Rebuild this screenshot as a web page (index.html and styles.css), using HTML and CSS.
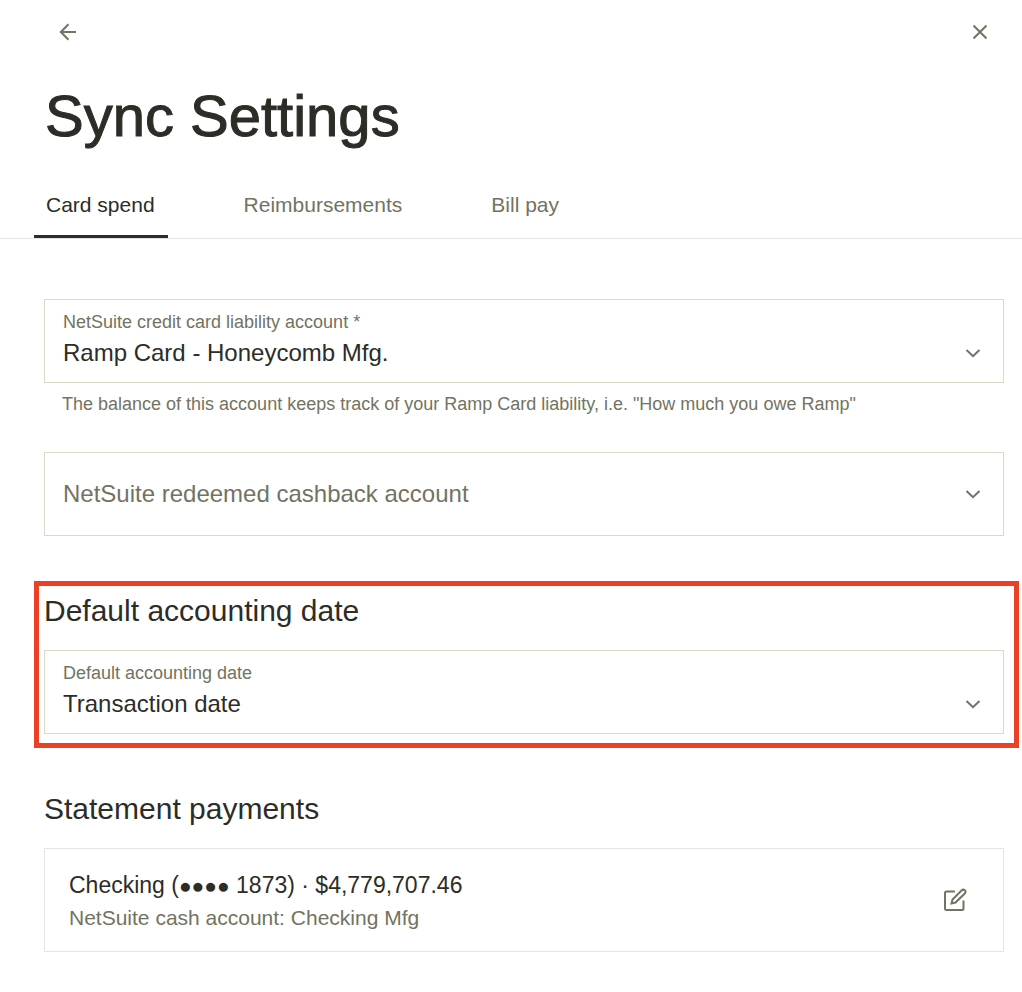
FILE: index.html
```html
<!DOCTYPE html>
<html lang="en">
<head>
    <meta charset="utf-8">
    <title>Sync Settings</title>
    <meta name="viewport" content="width=device-width, initial-scale=1.0">
    <link rel="stylesheet" href="styles.css">
</head>
<body>
    <header class="topbar">
        <button class="icon-btn" type="button" aria-label="Back">
            <svg width="24" height="24" viewBox="0 0 24 24"><path d="M12.500 4.200L4.800 12L12.500 19.800M4.800 12H20"/></svg>
        </button>
        <button class="icon-btn" type="button" aria-label="Close">
            <svg width="24" height="24" viewBox="0 0 24 24"><path d="M5.500 5.500L18.500 18.500M18.500 5.500L5.500 18.500"/></svg>
        </button>
    </header>

    <h1>Sync Settings</h1>

    <nav class="tabs" role="tablist">
        <button class="tab active" type="button" role="tab" aria-selected="true">Card spend</button>
        <button class="tab" type="button" role="tab" aria-selected="false">Reimbursements</button>
        <button class="tab" type="button" role="tab" aria-selected="false">Bill pay</button>
    </nav>

    <main>
        <div class="field">
            <label for="liability">NetSuite credit card liability account *</label>
            <select id="liability" required>
                <option>Ramp Card - Honeycomb Mfg.</option>
            </select>
            <svg class="chevron" width="16" height="16" viewBox="0 0 16 16"><path d="M1.500 5L8 11.200L14.500 5"/></svg>
        </div>
        <p class="hint">The balance of this account keeps track of your Ramp Card liability, i.e. "How much you owe Ramp"</p>

        <div class="field empty">
            <label for="cashback">NetSuite redeemed cashback account</label>
            <select id="cashback">
                <option value=""></option>
            </select>
            <svg class="chevron" width="16" height="16" viewBox="0 0 16 16"><path d="M1.500 5L8 11.200L14.500 5"/></svg>
        </div>

        <section class="highlight">
            <h2>Default accounting date</h2>
            <div class="field">
                <label for="date">Default accounting date</label>
                <select id="date">
                    <option>Transaction date</option>
                </select>
                <svg class="chevron" width="16" height="16" viewBox="0 0 16 16"><path d="M1.500 5L8 11.200L14.500 5"/></svg>
            </div>
        </section>

        <section>
            <h2>Statement payments</h2>
            <div class="card">
                <div>
                    <p class="account">Checking (<span class="dots">●●●●</span> 1873) · $4,779,707.46</p>
                    <p class="cash">NetSuite cash account: Checking Mfg</p>
                </div>
                <button class="icon-btn" type="button" aria-label="Edit">
                    <svg width="24" height="24" viewBox="0 0 24 24"><path d="M12 3.500H3.500Q2 3.500 2 5V20.500Q2 22 3.500 22H19Q20.500 22 20.500 20.500V12.500M8.500 15.500L9.500 11.500L18.800 2.200Q20.200 1 21.800 2.200Q23.200 3.800 22 5.200L12.500 14.500Z"/></svg>
                </button>
            </div>
        </section>
    </main>
</body>
</html>
```
FILE: styles.css
```css
* {
    box-sizing: border-box;
}
body {
    font-family: "Liberation Sans", Arial, sans-serif;
    background: #fff;
    color: #2c2d27;
    margin: 0;
}
h1, h2, p {
    margin: 0;
}
button {
    background: none;
    border: 0;
    padding: 0;
    font-family: inherit;
    cursor: pointer;
}
svg {
    display: block;
    fill: none;
    stroke: #727362;
    stroke-width: 2;
}
.topbar {
    display: flex;
    justify-content: space-between;
    padding: 12px 22px 12px 48px;
}
.icon-btn {
    display: flex;
    align-items: center;
    justify-content: center;
    width: 40px;
    height: 40px;
}
h1 {
    padding: 17px 45px 0;
    font-size: 58px;
    line-height: 70px;
    font-weight: 400;
    -webkit-text-stroke: 1px currentColor;
}
.tabs {
    display: flex;
    gap: 64px;
    margin-top: 21px;
    padding: 0 34px;
    border-bottom: 1px solid #e5e5e1;
}
.tab {
    height: 66px;
    padding: 3px 13px 0 12px;
    border-bottom: 3px solid transparent;
    font-size: 21px;
    color: #727362;
}
.tab.active {
    color: #2c2d27;
    border-bottom-color: #2c2d27;
}
main {
    padding: 60px 18px 40px 44px;
}
.field {
    position: relative;
}
.field label {
    position: absolute;
    top: 13px;
    left: 19px;
    font-size: 18px;
    line-height: 20px;
    color: #727362;
    pointer-events: none;
}
.field select {
    display: block;
    width: 100%;
    height: 84px;
    padding: 22px 48px 0 18px;
    appearance: none;
    background: #fff;
    border: 1px solid #d9d9c8;
    border-radius: 0;
    font-family: inherit;
    font-size: 24px;
    color: #2c2d27;
}
.chevron {
    position: absolute;
    top: 46px;
    right: 23px;
    pointer-events: none;
}
.field.empty label {
    top: 26px;
    font-size: 24px;
    line-height: 32px;
}
.field.empty .chevron {
    top: 34px;
}
.hint {
    margin: 9px 18px 36px;
    font-size: 18px;
    line-height: 24px;
    color: #727362;
}
.highlight {
    margin: 45px -15px 45px -10px;
    padding: 9px 10px 9px 5px;
    border: 5px solid #ec4026;
}
h2 {
    margin-bottom: 23px;
    font-size: 30px;
    line-height: 32px;
    font-weight: 400;
}
.card {
    display: flex;
    align-items: center;
    justify-content: space-between;
    padding: 18px 28px 18px 24px;
    border: 1px solid #e5e5e1;
}
.account {
    font-size: 23px;
    line-height: 36px;
}
.dots {
    font-size: 21px;
    line-height: 1;
}
.cash {
    font-size: 21px;
    line-height: 30px;
    color: #727362;
}
```
